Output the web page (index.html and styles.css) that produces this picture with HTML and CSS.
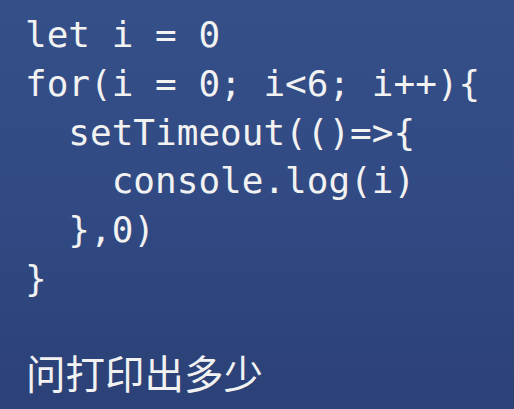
FILE: index.html
```html
<!DOCTYPE html>
<html lang="zh-CN">
<head>
<meta charset="utf-8">
<title>setTimeout</title>
<link rel="stylesheet" href="styles.css">
</head>
<body>
<main class="slide">
<pre class="code">let i = 0
for(i = 0; i&lt;6; i++){
  setTimeout(()=&gt;{
    console.log(i)
  },0)
}</pre>
<p class="question">问打印出多少</p>
</main>
</body>
</html>
```
FILE: styles.css
```css
html, body {
  margin: 0;
  padding: 0;
  height: 100%;
}
body {
  background: linear-gradient(to bottom, #354f89 0%, #314a83 50%, #2b4177 100%);
  color: #f2f2f2;
  overflow: hidden;
}
.slide {
  padding: 11px 0 0 25px;
}
.code {
  margin: 0;
  font-family: "DejaVu Sans Mono", monospace;
  font-size: 36px;
  line-height: 48.8px;
  color: #f2f2f2;
}
.question {
  margin: 44px 0 0 0;
  font-family: "Noto Sans CJK SC", sans-serif;
  font-size: 39.5px;
  line-height: 48px;
  padding-left: 1px;
}
```
